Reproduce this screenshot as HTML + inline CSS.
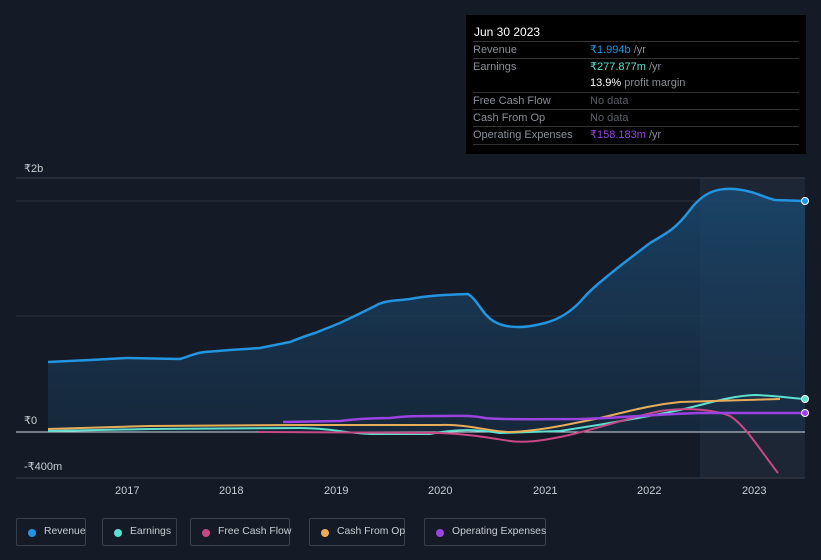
<!DOCTYPE html>
<html><head><style>
body{margin:0;width:821px;height:560px;background:#151b26;font-family:"Liberation Sans",sans-serif;overflow:hidden;position:relative}
.tt{position:absolute;left:466px;top:15px;width:340px;height:139px;background:#000;color:#8a8f98;font-size:11px}
.tt .h{color:#fff;font-size:12px;padding:10px 0 0 8px;height:19px}
.row{position:absolute;left:7px;width:326px;border-top:1px solid #333;height:17px;line-height:17px}
.row span{position:absolute;left:117px}
.leg{position:absolute;top:518px;height:28px;border:1px solid #3a404b;border-radius:2px;color:#c8ccd2;font-size:10.4px;line-height:26px;box-sizing:border-box;white-space:nowrap}
.leg i{position:absolute;left:11px;top:10px;width:8px;height:8px;border-radius:50%}
.leg b{font-weight:normal;position:absolute;left:27px}
.ax{position:absolute;color:#c8ccd2;font-size:11px}
</style></head><body>
<svg width="821" height="500" style="position:absolute;left:0;top:0">
<defs><linearGradient id="g" x1="0" y1="0" x2="0" y2="1"><stop offset="0" stop-color="#1a4a72" stop-opacity=".8"/><stop offset="1" stop-color="#173049" stop-opacity=".6"/></linearGradient></defs>
<rect x="700" y="178" width="105" height="300" fill="#1c2635"/>
<line x1="16" y1="178" x2="805" y2="178" stroke="#3a404b"/>
<line x1="16" y1="201" x2="805" y2="201" stroke="#2a313c"/>
<line x1="16" y1="316" x2="805" y2="316" stroke="#2a313c"/>
<line x1="16" y1="478" x2="805" y2="478" stroke="#3a404b"/>
<path d="M48,362 L90,360 L127,358 L180,359 C190,356 195,353 205,352 L230,350 L260,348 L290,342 C300,338 305,336 315,333 L340,323 C355,316 365,311 375,306 C385,300 395,301 410,299 C425,296 440,295 468,294 C478,300 482,315 495,322 C510,330 530,327 545,323 C560,319 570,312 580,302 C590,290 600,282 620,266 L650,243 C665,234 675,230 690,210 C705,190 720,188 735,189 C755,191 765,198 775,200 L805,201 L805,432 L48,432Z" fill="url(#g)"/>
<line x1="16" y1="432" x2="805" y2="432" stroke="#d8dbe0"/>
<path d="M48,362 L90,360 L127,358 L180,359 C190,356 195,353 205,352 L230,350 L260,348 L290,342 C300,338 305,336 315,333 L340,323 C355,316 365,311 375,306 C385,300 395,301 410,299 C425,296 440,295 468,294 C478,300 482,315 495,322 C510,330 530,327 545,323 C560,319 570,312 580,302 C590,290 600,282 620,266 L650,243 C665,234 675,230 690,210 C705,190 720,188 735,189 C755,191 765,198 775,200 L805,201" fill="none" stroke="#2394df" stroke-width="2.5"/>
<path d="M48,431 L150,429 L300,428 C330,428 345,433 370,434 L430,434 C460,428 480,430 500,433 L560,431 C600,425 640,418 680,410 C710,403 730,396 755,395 C780,396 790,398 805,399" fill="none" stroke="#5ee0d0" stroke-width="2"/>
<path d="M48,429 L150,426 L300,425 L440,425 C470,424 490,432 510,432 C540,431 570,424 600,418 C630,411 650,405 680,402 L780,399" fill="none" stroke="#e8ad5a" stroke-width="2"/>
<path d="M258,432 L440,433 C470,434 490,438 510,441 C525,443 540,441 560,437 C590,431 620,420 660,411 C690,407 715,410 730,416 C745,425 760,450 778,473" fill="none" stroke="#c84885" stroke-width="2"/>
<path d="M283,422 L340,421 C355,419 370,418 390,418 C405,416 415,416 440,416 C460,416 470,415 485,418 C500,420 540,419 580,419 C620,418 660,414 700,413 L805,413" fill="none" stroke="#9b43e0" stroke-width="2.5"/>
<circle cx="805" cy="201" r="3.5" fill="#2394df" stroke="#fff"/>
<circle cx="805" cy="399" r="3.5" fill="#5ee0d0" stroke="#fff"/>
<circle cx="805" cy="413" r="3.5" fill="#9b43e0" stroke="#fff"/>
</svg>
<div class="ax" style="left:24px;top:162px">₹2b</div>
<div class="ax" style="left:24px;top:414px">₹0</div>
<div class="ax" style="left:24px;top:460px">-₹400m</div>
<div class="ax" style="left:115px;top:485px">2017</div>
<div class="ax" style="left:219px;top:485px">2018</div>
<div class="ax" style="left:324px;top:485px">2019</div>
<div class="ax" style="left:428px;top:485px">2020</div>
<div class="ax" style="left:533px;top:485px">2021</div>
<div class="ax" style="left:637px;top:485px">2022</div>
<div class="ax" style="left:742px;top:485px">2023</div>
<div class="tt"><div class="h">Jun 30 2023</div>
<div class="row" style="top:26px">Revenue<span><b style="color:#2394df;font-weight:normal">₹1.994b</b> /yr</span></div>
<div class="row" style="top:43px">Earnings<span><b style="color:#5ee0d0;font-weight:normal">₹277.877m</b> /yr</span></div>
<div class="row" style="top:60px;border:none"><span><b style="color:#fff;font-weight:normal">13.9%</b> profit margin</span></div>
<div class="row" style="top:77px">Free Cash Flow<span style="color:#5a5f68">No data</span></div>
<div class="row" style="top:94px">Cash From Op<span style="color:#5a5f68">No data</span></div>
<div class="row" style="top:111px;border-bottom:1px solid #333">Operating Expenses<span><b style="color:#9b43e0;font-weight:normal">₹158.183m</b> /yr</span></div>
</div>
<div class="leg" style="left:16px;width:70px"><i style="background:#2394df"></i><b>Revenue</b></div>
<div class="leg" style="left:102px;width:75px"><i style="background:#5ee0d0"></i><b>Earnings</b></div>
<div class="leg" style="left:190px;width:100px"><i style="background:#c84885"></i><b>Free Cash Flow</b></div>
<div class="leg" style="left:309px;width:96px"><i style="background:#e8ad5a"></i><b>Cash From Op</b></div>
<div class="leg" style="left:424px;width:122px"><i style="background:#9b43e0"></i><b>Operating Expenses</b></div>
</body></html>
